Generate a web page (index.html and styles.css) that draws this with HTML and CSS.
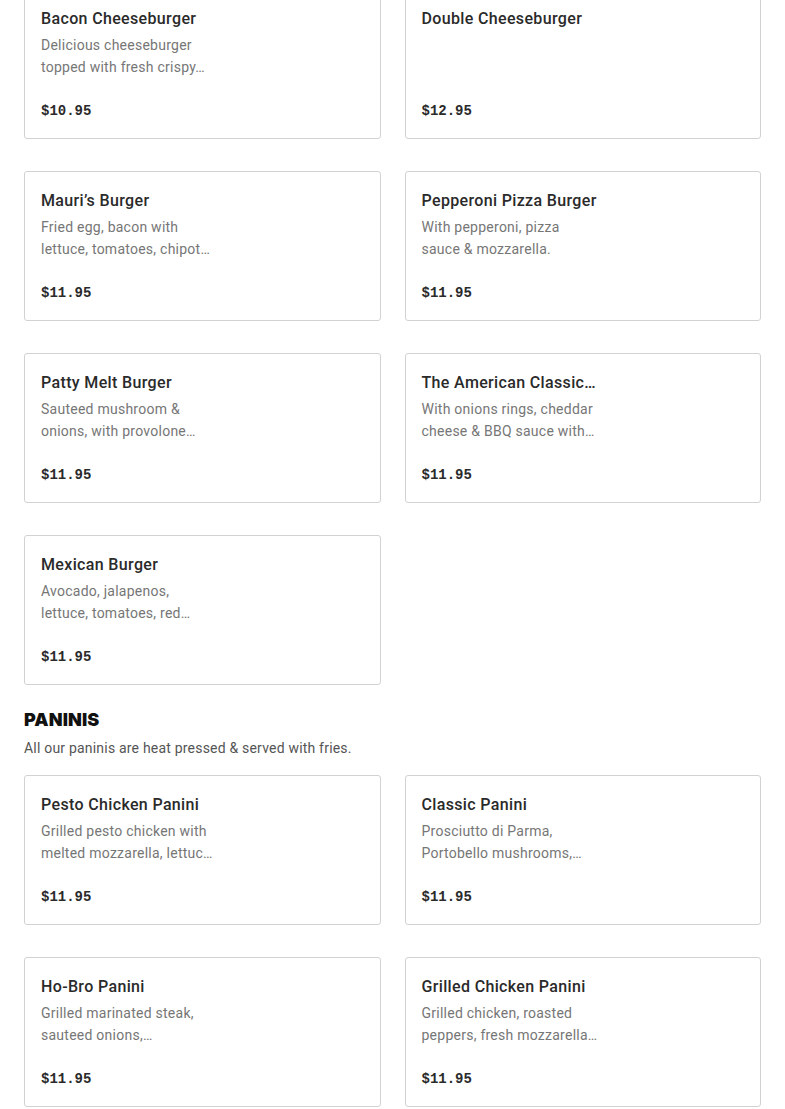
FILE: index.html
```html
<!DOCTYPE html>
<html>
<head>
<meta charset="utf-8">
<link rel="stylesheet" href="styles.css">
</head>
<body>
<main class="page">
  <section class="grid first">
    <div class="card"><div class="title">Bacon Cheeseburger</div><div class="desc"><span>Delicious cheeseburger</span><span>topped with fresh crispy…</span></div><div class="price">$10.95</div></div>
    <div class="card"><div class="title">Double Cheeseburger</div><div class="desc"></div><div class="price">$12.95</div></div>
    <div class="card"><div class="title">Mauri’s Burger</div><div class="desc"><span>Fried egg, bacon with</span><span>lettuce, tomatoes, chipot…</span></div><div class="price">$11.95</div></div>
    <div class="card"><div class="title">Pepperoni Pizza Burger</div><div class="desc"><span>With pepperoni, pizza</span><span>sauce &amp; mozzarella.</span></div><div class="price">$11.95</div></div>
    <div class="card"><div class="title">Patty Melt Burger</div><div class="desc"><span>Sauteed mushroom &amp;</span><span>onions, with provolone…</span></div><div class="price">$11.95</div></div>
    <div class="card"><div class="title">The American Classic…</div><div class="desc"><span>With onions rings, cheddar</span><span>cheese &amp; BBQ sauce with…</span></div><div class="price">$11.95</div></div>
    <div class="card"><div class="title">Mexican Burger</div><div class="desc"><span>Avocado, jalapenos,</span><span>lettuce, tomatoes, red…</span></div><div class="price">$11.95</div></div>
  </section>
  <h2 class="section-title">PANINIS</h2>
  <p class="section-desc">All our paninis are heat pressed &amp; served with fries.</p>
  <section class="grid">
    <div class="card"><div class="title">Pesto Chicken Panini</div><div class="desc"><span>Grilled pesto chicken with</span><span>melted mozzarella, lettuc…</span></div><div class="price">$11.95</div></div>
    <div class="card"><div class="title">Classic Panini</div><div class="desc"><span>Prosciutto di Parma,</span><span>Portobello mushrooms,…</span></div><div class="price">$11.95</div></div>
    <div class="card"><div class="title">Ho-Bro Panini</div><div class="desc"><span>Grilled marinated steak,</span><span>sauteed onions,…</span></div><div class="price">$11.95</div></div>
    <div class="card"><div class="title">Grilled Chicken Panini</div><div class="desc"><span>Grilled chicken, roasted</span><span>peppers, fresh mozzarella…</span></div><div class="price">$11.95</div></div>
  </section>
</main>
</body>
</html>
```
FILE: styles.css
```css
html, body { margin: 0; padding: 0; background: #fff; }
body { font-family: Roboto, "Noto Sans", sans-serif; color: #2d2d2d; overflow: hidden; }
.page { padding: 0 24px; }
.grid {
  display: grid;
  grid-template-columns: 1fr 1fr;
  column-gap: 24px;
  row-gap: 32px;
}
.grid.first { margin-top: -11px; }
.card {
  border: 1px solid #d2d2d2;
  border-radius: 3px;
  padding: 17px 16px 16px;
  height: 150px;
  box-sizing: border-box;
  display: flex;
  flex-direction: column;
}
.title {
  font-size: 16px;
  font-weight: 500;
  line-height: 24px;
  color: #2a2a2a;
  white-space: nowrap;
  letter-spacing: 0.35px;
}
.desc {
  margin-top: 3px;
  font-size: 14px;
  line-height: 22px;
  color: #767676;
  height: 44px;
  display: flex;
  flex-direction: column;
  letter-spacing: 0.25px;
}
.desc span { white-space: nowrap; }
.price {
  margin-top: 22px;
  font-family: "Liberation Mono", monospace;
  font-weight: 700;
  font-size: 14px;
  line-height: 22px;
  color: #2a2a2a;
}
.section-title {
  margin: 23px 0 0;
  font-family: Inter, sans-serif;
  font-size: 18px;
  line-height: 24px;
  font-weight: 900;
  color: #111;
  letter-spacing: 0.1px;
}
.section-desc {
  margin: 5px 0 16px;
  font-size: 14px;
  line-height: 22px;
  color: #555;
  letter-spacing: 0.2px;
}
```
